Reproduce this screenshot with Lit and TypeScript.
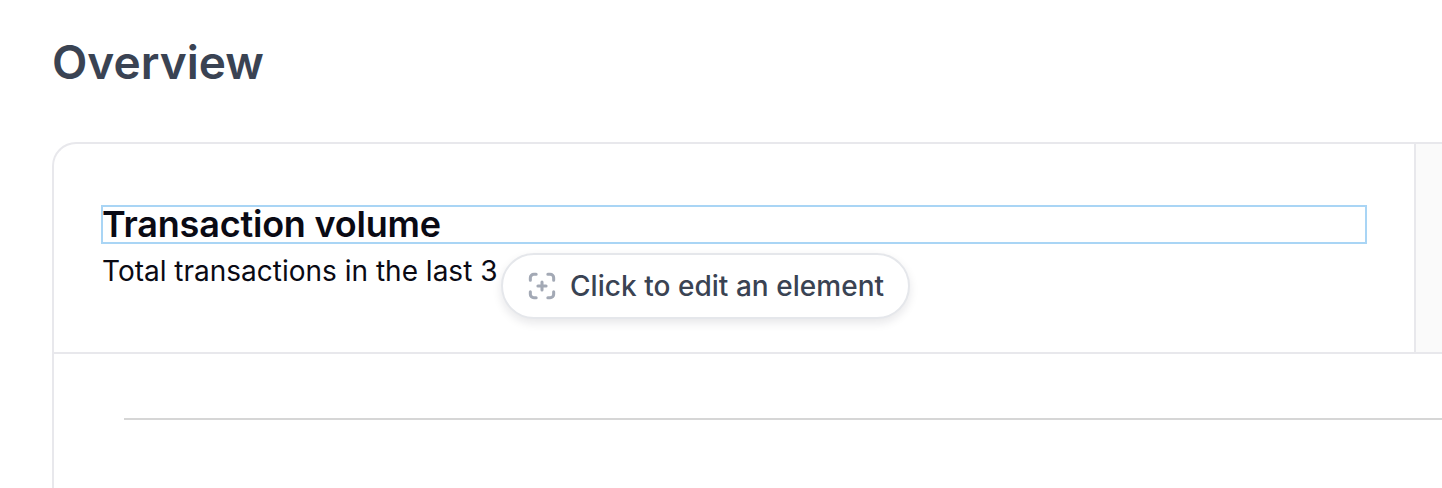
import { LitElement, html, css } from "lit";
import { customElement } from "lit/decorators.js";

@customElement("app-root")
export class AppRoot extends LitElement {
  static styles = css`
    :host {
      display: block;
      width: 1442px;
      height: 488px;
      overflow: hidden;
      background: #fff;
      font-family: Inter, "Liberation Sans", sans-serif;
      position: relative;
    }
    .page {
      padding: 32px 0 0 52px;
      box-sizing: border-box;
      width: 1442px;
    }
    h1 {
      margin: 0 0 50px;
      font-size: 46px;
      line-height: 60px;
      font-weight: 600;
      color: #3a4353;
      letter-spacing: 0;
    }
    .card {
      width: 1500px;
      height: 500px;
      box-sizing: border-box;
      border: 2px solid #e8e8ec;
      border-right: none;
      border-radius: 24px 0 0 0;
      overflow: hidden;
    }
    .head {
      display: flex;
      height: 208px;
      border-bottom: 2px solid #e8e8ec;
    }
    .main {
      width: 1362px;
      box-sizing: border-box;
      padding: 62px 48px 0;
      border-right: 2px solid #e8e8ec;
      flex: none;
    }
    .side {
      flex: 1;
      background: #fafafa;
    }
    .title {
      margin: 0;
      height: 37px;
      box-sizing: border-box;
      outline: 2px solid #a9d5f5;
      outline-offset: -1px;
      font-size: 36px;
      line-height: 37px;
      font-weight: 600;
      color: #0a0a14;
      letter-spacing: -0.2px;
    }
    .sub {
      margin: 10px 0 0;
      font-size: 28px;
      line-height: 36px;
      color: #0a0a14;
    }
    .chart {
      padding: 64px 0 0 70px;
    }
    .gridline {
      height: 2px;
      background: #d6d6d6;
    }
    .pill {
      position: absolute;
      left: 501px;
      top: 253px;
      width: 409px;
      height: 66px;
      box-sizing: border-box;
      display: flex;
      align-items: center;
      gap: 14px;
      padding-left: 25px;
      background: #fff;
      border: 2px solid #e5e7eb;
      border-radius: 33px;
      box-shadow: 0 4px 10px rgba(17, 24, 39, 0.1);
      color: #3a4353;
      font-size: 28px;
      font-weight: 500;
      letter-spacing: 0.04px;
      white-space: nowrap;
    }
    .pill svg {
      width: 28px;
      height: 28px;
      flex: none;
    }
  `;

  render() {
    return html`
      <div class="page">
        <h1>Overview</h1>
        <div class="card">
          <div class="head">
            <div class="main">
              <div class="title">Transaction volume</div>
              <div class="sub">Total transactions in the last 3</div>
            </div>
            <div class="side"></div>
          </div>
          <div class="chart"><div class="gridline"></div></div>
        </div>
      </div>
      <div class="pill">
        <svg viewBox="0 0 24 24" fill="none" stroke="#a3a9b5" stroke-width="2.6" stroke-linecap="round" stroke-linejoin="round">
          <path d="M2 7V5a3 3 0 0 1 3-3h2M17 2h2a3 3 0 0 1 3 3v2M22 17v2a3 3 0 0 1-3 3h-2M7 22H5a3 3 0 0 1-3-3v-2M12 8.5v7M8.5 12h7" />
        </svg>
        <span>Click to edit an element</span>
      </div>
    `;
  }
}
